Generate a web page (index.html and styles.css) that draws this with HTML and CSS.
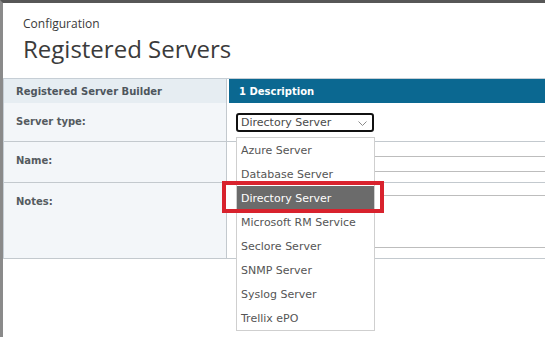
FILE: index.html
```html
<!DOCTYPE html>
<html lang="en">
<head>
    <meta charset="UTF-8">
    <meta name="viewport" content="width=device-width, initial-scale=1.0">
    <title>Registered Servers</title>
    <link rel="stylesheet" href="styles.css">
</head>
<body>
    <div class="page">
        <div class="page-header">
            <div class="crumb">Configuration</div>
            <h1>Registered Servers</h1>
        </div>

        <div class="builder">
            <div class="cell label head">Registered Server Builder</div>
            <div class="cell step"><span>1 Description</span></div>

            <div class="cell label row-type">Server type:</div>
            <div class="cell field row-type">
                <div class="select">
                    <span>Directory Server</span>
                    <svg class="chevron" width="9" height="5" viewBox="0 0 9 5">
                        <polyline points="0.5,0.5 4.5,4.5 8.5,0.5" fill="none" stroke="#8a8a8a" stroke-width="1"/>
                    </svg>
                    <div class="options">
                        <div class="option">Azure Server</div>
                        <div class="option">Database Server</div>
                        <div class="option selected">Directory Server</div>
                        <div class="option">Microsoft RM Service</div>
                        <div class="option">Seclore Server</div>
                        <div class="option">SNMP Server</div>
                        <div class="option">Syslog Server</div>
                        <div class="option">Trellix ePO</div>
                        <div class="callout"></div>
                    </div>
                </div>
            </div>

            <div class="cell label row-name">Name:</div>
            <div class="cell field row-name">
                <div class="input"></div>
            </div>

            <div class="cell label row-notes">Notes:</div>
            <div class="cell field row-notes">
                <div class="textarea"></div>
            </div>
        </div>
    </div>
</body>
</html>
```

FILE: styles.css
```css
html, body {
    margin: 0;
    height: 100%;
}
body {
    background: #fff;
    border-top: 3px solid #575757;
    border-left: 3px solid #8a8a8a;
    box-sizing: border-box;
    overflow: hidden;
    font-family: "DejaVu Sans", Verdana, sans-serif;
}
.page-header {
    padding: 13px 0 0 20px;
    font-family: "Open Sans", "Segoe UI", sans-serif;
}
.crumb {
    font-size: 12px;
    line-height: 16px;
    color: #3a3a3a;
}
h1 {
    margin: 0;
    font-size: 24px;
    line-height: 33px;
    font-weight: normal;
    color: #3b3b3b;
}
.builder {
    margin-top: 13px;
    border-top: 1px solid #c6ced5;
    border-left: 1px solid #c6ced5;
    display: grid;
    grid-template-columns: 223px 1fr;
}
.cell {
    box-sizing: border-box;
    border-bottom: 1px solid #c3c9ce;
}
.label {
    background: #f3f6f9;
    border-right: 1px solid #c3c9ce;
    padding: 12px 0 0 12px;
    font-size: 10px;
    line-height: 13px;
    font-weight: bold;
    color: #555b60;
}
.label.head {
    background: #e6edf2;
    height: 24px;
    padding-top: 6px;
    border-bottom: none;
    color: #4e565d;
}
.step {
    height: 24px;
    border-bottom: none;
    padding-left: 2px;
}
.step span {
    display: block;
    height: 24px;
    background: #0b6891;
    color: #fff;
    font-size: 10px;
    font-weight: bold;
    line-height: 25px;
    padding-left: 10px;
}
.row-type { height: 39px; }
.row-name { height: 41px; }
.row-notes { height: 76px; }
.field {
    padding-left: 9px;
}
.row-type.field { padding-top: 10px; }
.row-name.field { padding-top: 14px; }
.row-notes.field { padding-top: 12px; }
.select {
    position: relative;
    box-sizing: border-box;
    width: 138px;
    height: 19px;
    border: 2px solid #111;
    border-radius: 3px;
    padding-left: 3px;
    font-size: 11px;
    line-height: 16px;
    color: #4a4a4a;
}
.chevron {
    position: absolute;
    right: 5px;
    top: 6px;
}
.options {
    position: absolute;
    z-index: 2;
    left: -2px;
    top: 22px;
    box-sizing: border-box;
    width: 139px;
    background: #fff;
    border: 1px solid #cfcfcf;
}
.option {
    box-sizing: border-box;
    height: 24px;
    line-height: 24px;
    padding: 1px 0 0 4px;
    font-size: 11px;
    color: #555;
}
.option.selected {
    background: #6b6b6b;
    color: #fff;
}
.callout {
    position: absolute;
    left: -15px;
    top: 43px;
    width: 162px;
    height: 32px;
    box-sizing: border-box;
    border: 4px solid #d8222d;
    background: linear-gradient(to right, #fff 10px, transparent 10px, transparent 149px, #fff 149px);
}
.input {
    box-sizing: border-box;
    height: 16px;
    border: 1px solid #bdbdbd;
    border-right: none;
}
.textarea {
    box-sizing: border-box;
    height: 53px;
    border: 1px solid #bdbdbd;
    border-right: none;
}
```
